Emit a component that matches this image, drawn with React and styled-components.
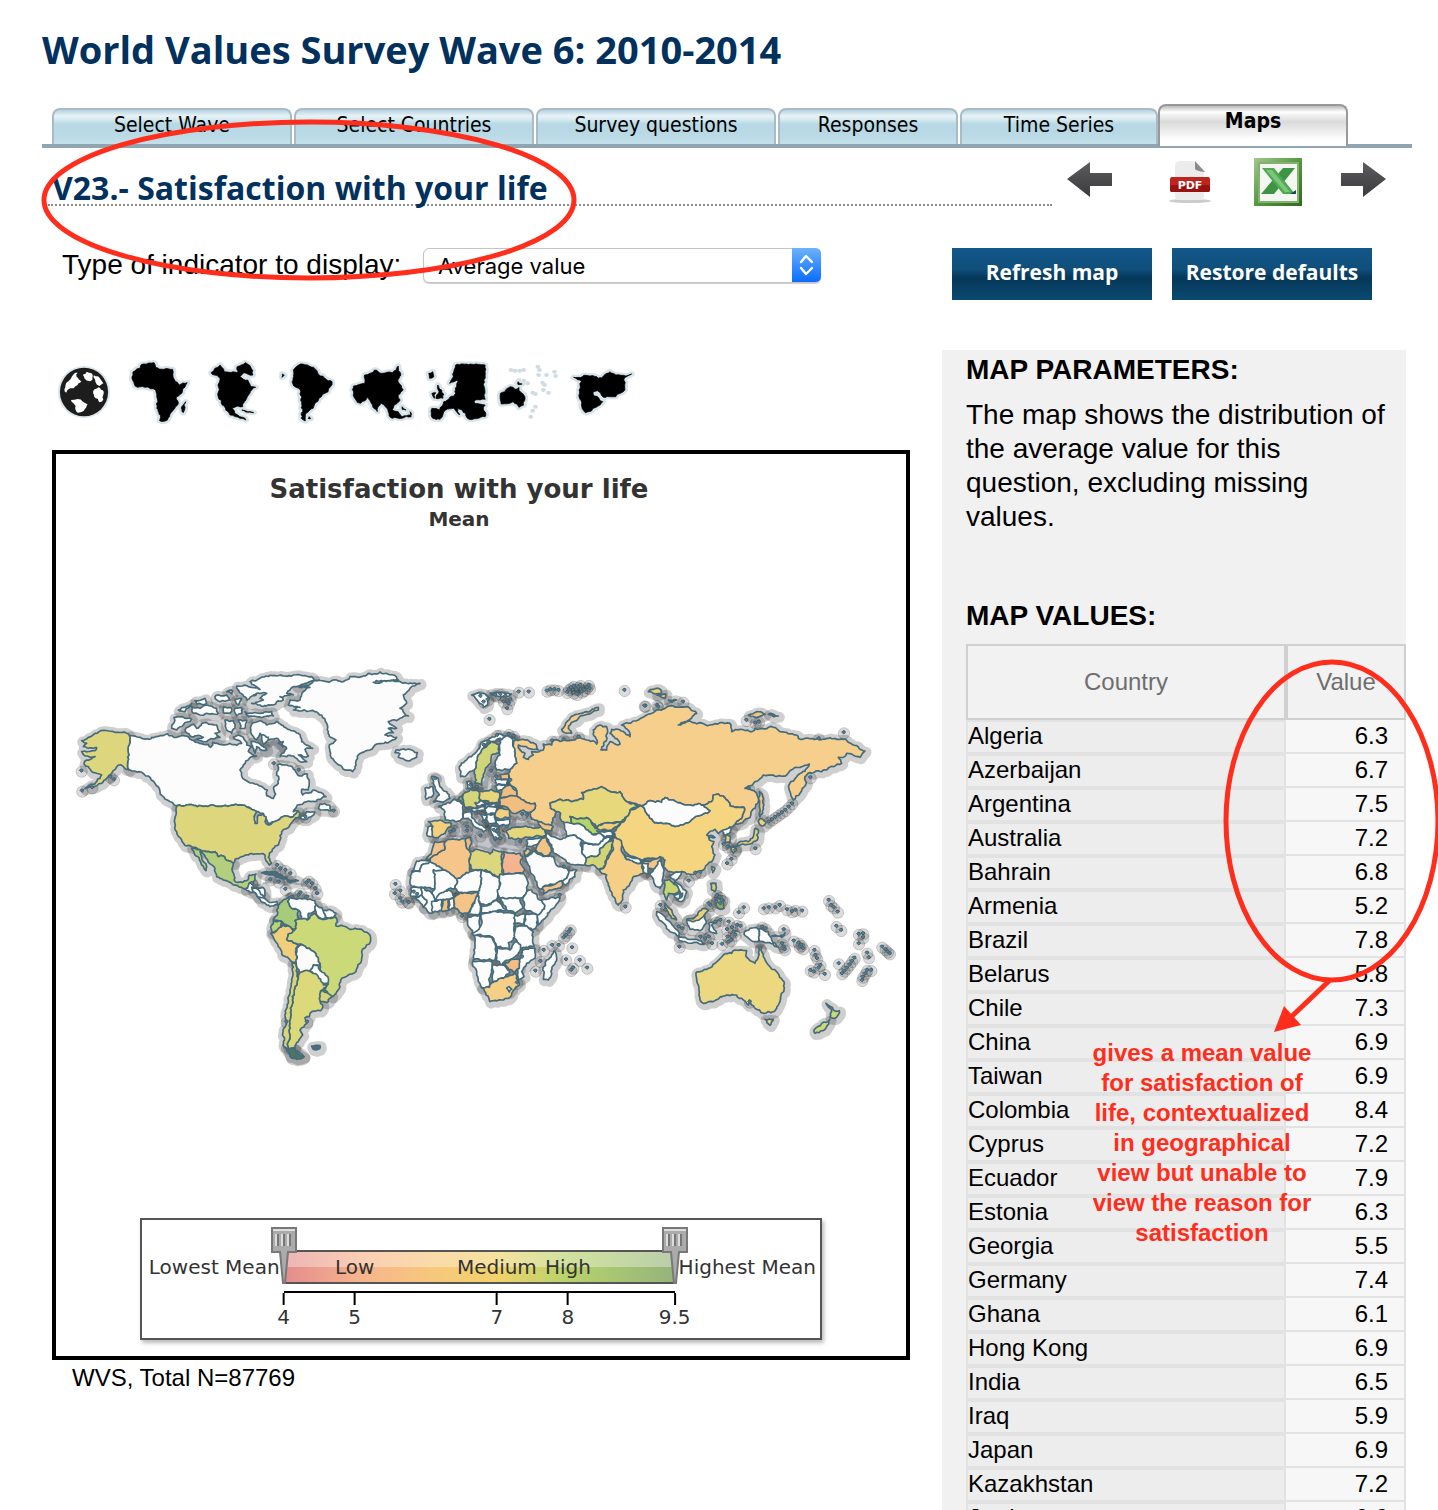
import React, { useState } from "react";
import styled, { createGlobalStyle, css } from "styled-components";

const GlobalStyle = createGlobalStyle`
  *, *::before, *::after { box-sizing: border-box; }
  body { margin: 0; background: #fff; color: #000; font-family: "Liberation Sans", Arial, sans-serif; }
  h1, h2, h3, p { margin: 0; }
`;

const navy = "#01315c";
const red = "#ff2d1c";
const headingFont = `"Trebuchet MS", "Open Sans", sans-serif`;
const verdana = `"DejaVu Sans", Verdana, sans-serif`;

/* ---------- page frame ---------- */

const Page = styled.main`
  position: relative;
  height: 100vh;
  overflow: hidden;
  padding: 24px 26px 0 42px;
`;

const Title = styled.h1`
  height: 52px;
  font: 700 38px/50px ${headingFont};
  color: ${navy};
`;

const Tabs = styled.nav`
  display: flex;
  align-items: flex-end;
  gap: 2px;
  height: 44px;
  margin-top: 28px;
  padding-left: 10px;
  background: linear-gradient(#8fa5b2, #8fa5b2) left bottom / 100% 4px no-repeat;
`;

const Tab = styled.a`
  width: ${(p) => p.$width}px;
  height: 36px;
  margin-bottom: 4px;
  border: 2px solid #a9bcc6;
  border-bottom: 0;
  border-radius: 8px 8px 0 0;
  background: linear-gradient(#b5d3df 0, #e8f3f7 6px, #d3e8ef 10px, #b7d8e4 14px, #b7d8e4 22px, #c5e1eb 36px);
  color: #000;
  font: 400 21px/30px "DejaVu Sans Condensed", Tahoma, sans-serif;
  text-align: center;
  text-decoration: none;
  ${(p) =>
    p.$active &&
    css`
      height: 42px;
      margin: 0 0 2px -2px;
      border-color: #999;
      background: linear-gradient(#bbb 0, #fff 6px, #eee 10px, #dadada 16px, #fff 34px);
      font-weight: 700;
    `}
`;

const QuestionRow = styled.header`
  display: flex;
  align-items: flex-start;
  justify-content: space-between;
  padding: 10px 24px 0 6px;
`;

const Question = styled.h2`
  flex: 0 1 1004px;
  height: 48px;
  padding-left: 4px;
  border-bottom: 2px dotted #8c8c8c;
  font: 700 32px/60px ${headingFont};
  color: ${navy};
  white-space: nowrap;
`;

const Tools = styled.div`
  display: flex;
  gap: 38px;
  align-items: center;
`;

const ToolButton = styled.button`
  width: 48px;
  height: 48px;
  padding: 0;
  border: 0;
  background: none;
  &:first-child { margin-right: 16px; }
  svg { display: block; }
`;

const ControlRow = styled.form`
  display: flex;
  align-items: flex-start;
  height: 102px;
  margin-top: 42px;
  padding: 0 40px 0 20px;
`;

const Label = styled.label`
  width: 361px;
  font-size: 28px;
  line-height: 34px;
`;

const SelectBox = styled.div`
  position: relative;
  width: 398px;
  height: 35px;
  svg { position: absolute; right: 0; top: 0; pointer-events: none; }
`;

const Select = styled.select`
  appearance: none;
  width: 100%;
  height: 35px;
  padding: 1px 14px 0;
  border: 1px solid #c4c4c4;
  border-radius: 6px;
  background: #fff;
  box-shadow: 0 1px 1px #ccc;
  color: #000;
  font: 400 22px/33px Inter, sans-serif;
`;

const Actions = styled.div`
  display: flex;
  gap: 20px;
  margin-left: auto;
`;

const ActionButton = styled.button`
  width: 200px;
  height: 52px;
  padding: 0 0 4px;
  border: 0;
  background: linear-gradient(#12578a 0, #104f7b 40%, #04375a 58%, #073d60 70%, #0b4a71 100%);
  color: #fff;
  font: 700 21px/30px ${headingFont};
  white-space: nowrap;
`;

const Content = styled.div`
  display: flex;
  align-items: flex-start;
  justify-content: space-between;
  padding: 0 6px 0 10px;
`;

/* ---------- map column ---------- */

const MapColumn = styled.section`
  flex: 0 1 858px;
`;

const RegionBar = styled.div`
  display: flex;
  gap: 14px;
  height: 100px;
  padding: 12px 2px 0;
`;

const RegionButton = styled.button`
  width: 60px;
  height: 60px;
  padding: 0;
  border: 0;
  background: none;
  svg { display: block; overflow: visible; }
`;

const MapFrame = styled.figure`
  display: flex;
  flex-direction: column;
  height: 910px;
  margin: 0;
  border: 4px solid #000;
`;

const MapHeading = styled.figcaption`
  height: 196px;
  padding: 18px 44px 0 0;
  color: #333;
  font-family: ${verdana};
  font-weight: 700;
  text-align: center;
`;

const MapTitle = styled.div`
  font-size: 26px;
  line-height: 34px;
`;

const MapSubtitle = styled.div`
  font-size: 20px;
  line-height: 26px;
`;

const MapSvg = styled.svg`
  display: block;
  width: 100%;
`;

const Footnote = styled.p`
  padding: 0 20px;
  font-size: 24px;
  line-height: 36px;
`;

/* ---------- legend ---------- */

const Legend = styled.div`
  display: grid;
  grid-template-columns: 1fr 391px 1fr;
  width: 682px;
  height: 122px;
  margin: auto auto 16px;
  padding-top: 30px;
  border: 2px solid #555;
  box-shadow: 2px 3px 4px #bbb;
  color: #333;
  font: 400 20px/34px ${verdana};
  white-space: nowrap;
`;

const LegendEnd = styled.span`
  display: flex;
  justify-content: ${(p) => (p.$right ? "flex-start" : "flex-end")};
  padding: 0 4px;
`;

const Scale = styled.div`
  position: relative;
`;

const Bar = styled.div`
  position: relative;
  height: 34px;
  border: solid #555;
  border-width: 2px 0;
  line-height: 30px;
  background:
    linear-gradient(rgba(255, 255, 255, 0.35) 50%, transparent 50%),
    linear-gradient(90deg, #e48c8e 0, #f7b58c 20%, #f6c87c 38%, #f2d26c 54%, #b9d36b 72%, #94b47c 100%);
`;

const Mark = styled.span`
  position: absolute;
  top: 0;
  transform: translateX(-50%);
`;

const Axis = styled.div`
  position: relative;
  height: 40px;
  margin-top: 7px;
  border-top: 2px solid #000;
`;

const Tick = styled(Mark)`
  display: flex;
  flex-direction: column;
  align-items: center;
  line-height: 24px;
  &::before { content: ""; width: 2px; height: 12px; background: #000; }
`;

const Handle = styled.svg`
  position: absolute;
  top: -23px;
  margin-left: -13px;
  pointer-events: none;
`;

const Range = styled.input`
  position: absolute;
  top: -24px;
  left: ${(p) => (p.$upper ? "50%" : "-13px")};
  width: calc(50% + 13px);
  height: 56px;
  margin: 0;
  opacity: 0;
`;

/* ---------- parameter column ---------- */

const Side = styled.aside`
  flex: 0 0 464px;
  padding-left: 24px;
  background: #f1f1f1;
`;

const SideTitle = styled.h3`
  font-size: 28px;
  line-height: 40px;
`;

const SideText = styled.p`
  height: 206px;
  padding: 8px 20px 0 0;
  font-size: 28px;
  line-height: 34px;
`;

const Values = styled.table`
  width: 100%;
  margin-top: 8px;
  border-collapse: separate;
  border-spacing: 0;
  font-size: 24px;
  line-height: 28px;
`;

const HeadCell = styled.th`
  width: ${(p) => p.$width};
  height: 76px;
  padding: 0;
  border: 2px solid #d0d0d0;
  background: #f2f2f2;
  color: #6e6e6e;
  font-weight: 400;
`;

const NameCell = styled.td`
  height: 34px;
  padding: 0 0 2px;
  border: 2px solid #e2e2e2;
  background: #ededed;
`;

const ValueCell = styled.td`
  height: 34px;
  padding: 0 16px 0 0;
  border: solid #e2e2e2;
  border-width: 0 2px 2px 0;
  background: #f7f7f7;
  text-align: right;
`;

/* ---------- hand-drawn notes over the page ---------- */

const Markup = styled.svg`
  position: absolute;
  left: 0;
  top: 0;
  width: 1438px;
  height: 1510px;
  pointer-events: none;
`;

const Note = styled.p`
  position: absolute;
  left: 1087px;
  top: 1038px;
  width: 230px;
  color: ${red};
  font-size: 24px;
  font-weight: 700;
  line-height: 30px;
  text-align: center;
`;

/* ---------- map drawing ---------- */

/* Outlines are kept on four overlapping sheets; a letter in a path switches sheet. */
const SHEETS = { A: [0, 0], B: [0, 600], C: [1020, 60], D: [1740, 60] };

function parse(text) {
  let off = SHEETS.A;
  const pts = [];
  text.split(/\s+/).forEach((t) => {
    if (SHEETS[t]) off = SHEETS[t];
    else if (t) {
      const [x, y] = t.split(",").map(Number);
      pts.push([x + off[0], y + off[1]]);
    }
  });
  return pts;
}

const noise = (x, y) => {
  const s = Math.sin(x * 12.9898 + y * 78.233) * 43758.5453;
  return s - Math.floor(s) - 0.5;
};

/* Shared borders break the same way from both sides, since ends are ordered first. */
function split(a, b) {
  const len = Math.hypot(b[0] - a[0], b[1] - a[1]);
  if (len < 9) return [];
  const [p, q] = a[0] < b[0] || (a[0] === b[0] && a[1] < b[1]) ? [a, b] : [b, a];
  const k = noise(p[0] + q[1], p[1] + q[0]) * Math.min(0.42, 7 / len);
  const m = [(a[0] + b[0]) / 2 - (q[1] - p[1]) * k, (a[1] + b[1]) / 2 + (q[0] - p[0]) * k];
  return [...split(a, m), m, ...split(m, b)];
}

function outline(text) {
  const pts = parse(text);
  const out = [];
  pts.forEach((p, i) => {
    out.push(p, ...split(p, pts[(i + 1) % pts.length]));
  });
  return "M" + out.map((p) => p[0].toFixed(1) + " " + p[1].toFixed(1)).join("L") + "Z";
}

const W = "#fcfcfc";
const LAND = [
  [W, "A 208,257 240,262 268,268 275,262 300,257 322,251 350,262 375,258 395,270 418,280 445,283 452,292 458,276 485,284 510,280 530,286 545,280 520,262 535,255 550,262 560,285 575,290 565,305 590,318 568,325 550,345 540,360 545,378 556,390 585,402 610,413 622,420 620,437 640,445 647,432 642,410 655,400 657,388 650,375 655,360 652,345 690,348 705,360 720,378 742,372 748,395 745,420 725,418 728,435 745,430 760,420 790,432 798,440 765,455 740,455 712,465 700,485 715,484 700,500 668,500 650,512 625,520 618,505 610,490 595,485 575,480 545,465 352,467 345,466 315,447 300,425 285,400 265,378 240,365 208,360"],
  ["#ddd67c", "A 352,467 545,465 575,478 590,485 582,500 585,520 592,520 595,495 610,492 618,500 615,515 625,525 650,512 668,500 700,500 715,484 720,490 718,500 700,512 690,525 665,545 660,570 655,585 640,595 628,610 625,622 634,640 628,645 618,632 615,615 600,612 585,612 565,615 545,620 525,628 520,640 505,632 490,618 475,620 465,605 440,605 400,592 380,588 365,570 350,545 345,520 348,495"],
  ["#ddd67c", "A 208,257 200,250 165,247 130,241 105,250 85,262 65,272 80,280 70,290 110,293 105,302 65,305 75,318 105,320 80,330 72,342 85,350 98,367 125,375 120,385 90,405 75,416 95,412 125,400 140,385 155,370 175,345 190,350 208,360"],
  ["#b3cf7d", "A 395,595 440,605 465,605 475,620 490,618 505,632 520,640 518,665 522,690 535,697 560,692 568,675 588,672 585,690 570,697 560,715 545,712 520,705 490,690 470,680 465,655 448,640 435,618 420,605 425,620 440,650 438,662 425,645 405,615"],
  [W, "A 556,717 575,697 580,712 608,712 615,735 612,745 628,757 650,755 655,765 640,768 620,765 600,748 585,728 565,722"],
  [W, "A 575,712 598,722 612,740 600,742 585,728"],
  [W, "A 718,505 740,485 765,487 740,508"],
  [W, "A 780,462 808,465 815,482 790,480 775,475"],
  [W, "A 690,150 720,150 730,125 750,112 710,108 755,100 762,92 800,95 830,90 850,95 870,80 905,80 925,70 960,66 1000,75 1015,90 940,97 990,92 1035,98 1080,100 1050,115 1030,135 1040,160 1020,175 1045,198 1020,205 1010,212 985,215 1010,235 985,235 1000,248 975,255 1010,262 985,278 950,282 930,300 905,308 892,318 888,345 878,365 850,358 830,340 812,310 808,285 828,270 812,262 805,245 800,220 785,195 765,185 700,180 720,172 685,165"],
  [W, "A 1008,300 1045,297 1072,308 1070,322 1040,332 1015,322 1020,312 1005,308"],
  [W, "A 570,95 600,85 650,78 700,75 755,80 762,92 740,100 700,110 680,130 700,135 660,140 670,150 650,155 640,165 600,165 575,160 610,150 600,145 620,130 580,135 590,130 560,150 535,120 530,108 565,110 600,118"],
  [W, "A 375,240 400,222 410,235 425,220 440,218 470,225 480,245 465,250 480,262 440,275 405,270 430,262 390,258"],
  [W, "A 342,203 368,200 395,208 370,225 350,240 335,235"],
  [W, "A 575,222 600,212 620,225 650,215 680,235 715,250 725,275 758,295 735,298 745,318 715,315 740,335 720,335 700,318 660,318 680,295 650,265 620,270 600,250 590,270 572,245"],
  [W, "A 495,210 520,212 525,235 515,250 498,235"],
  [W, "A 535,210 560,210 555,235 540,235"],
  [W, "A 555,185 600,190 635,185 640,198 565,200"],
  [W, "A 395,170 420,175 440,165 470,175 475,190 440,190 420,195 400,190"],
  [W, "A 355,180 395,160 375,185"],
  [W, "A 405,152 435,145 440,160 410,162"],
  [W, "A 465,140 500,135 510,150 480,155"],
  [W, "A 490,170 515,175 510,190 490,188"],
  [W, "A 500,125 518,122 515,132"],
  [W, "A 525,150 545,145 535,165"],
  [W, "A 525,175 545,172 545,190 530,198"],
  [W, "A 655,280 670,275 668,290"],
  [W, "A 575,275 600,282 620,300 605,300 590,290 585,310"],
  [W, "A 605,255 625,262 610,285"],
  ["#a6cb7a", "B 650,180 655,165 668,152 687,140 683,155 692,172 718,182 712,195 718,207 705,212 708,235 695,236 680,225 664,214 640,208 652,195"],
  ["#b8d478", "B 640,210 664,214 662,228 650,242 636,248 632,232"],
  ["#f0cf7c", "B 632,250 650,242 668,225 695,236 700,243 685,252 680,268 700,278 718,282 708,295 708,335 696,335 665,312 655,290 640,262"],
  [W, "B 687,140 700,145 735,145 765,152 770,165 765,182 745,190 742,208 725,208 718,182 692,172 683,155"],
  [W, "B 768,165 785,172 790,182 795,205 775,200 768,185"],
  [W, "B 790,182 808,178 828,190 820,203 795,205"],
  ["#cbd978", "B 705,212 718,207 742,210 765,190 775,203 800,207 825,200 832,215 828,228 850,228 865,235 905,238 925,250 932,265 928,282 905,305 900,340 888,365 865,375 842,390 840,410 828,430 818,440 795,420 805,402 803,380 785,370 780,345 775,325 765,308 740,295 728,285 718,282 700,278 680,268 685,252 700,243 708,235"],
  [W, "B 718,287 728,285 740,295 765,308 775,325 780,345 760,345 750,362 718,368 708,335 710,295"],
  [W, "B 760,345 775,347 780,362 803,380 803,400 780,402 780,388 760,372 750,362"],
  ["#d6d478", "B 788,420 815,438 805,455 782,455 778,435"],
  ["#dcd97b", "B 718,370 745,362 775,380 782,388 790,405 800,405 782,422 778,445 788,465 782,482 750,490 748,500 735,503 740,520 720,540 728,555 715,575 705,592 685,595 690,555 692,500 697,450 705,410 715,385"],
  ["#d8d478", "B 697,338 708,340 712,370 715,385 705,410 697,450 692,500 690,555 685,595 705,598 732,620 712,625 690,618 672,590 668,550 678,510 682,470 690,430 695,390"],
  ["#4b7566", "B 676,592 705,596 715,612 732,620 710,628 690,618"],
  ["#4b6d80", "B 755,588 780,587 778,597 760,598"],

  ["#f6cf8c", "C 340,205 375,210 410,228 415,240 385,235 355,225 360,240 375,250 370,262 385,268 400,255 395,245 430,240 430,222 455,225 460,212 500,212 530,205 560,210 585,215 590,222 580,180 600,165 620,170 622,190 612,225 603,240 620,240 630,215 655,225 660,222 630,190 635,178 660,180 690,200 688,185 665,165 685,160 715,150 740,135 760,128 D 50,120 100,108 150,115 170,130 155,145 115,165 140,155 180,158 210,165 240,158 270,160 275,185 300,178 330,185 345,175 400,172 420,185 470,195 475,205 530,207 570,203 610,208 640,225 675,243 660,262 620,250 610,262 595,262 605,280 580,290 545,305 510,308 495,320 497,345 480,370 460,390 450,365 447,345 470,320 500,295 508,282 480,292 465,292 440,315 400,315 370,315 345,335 315,355 330,358 350,370 355,395 345,415 325,445 300,460 285,462 310,430 312,412 285,412 270,408 250,378 235,372 220,375 215,395 190,405 150,405 120,398 100,390 75,383 65,397 30,392 5,408 C 720,405 700,400 680,395 660,365 625,362 605,350 575,360 545,368 550,388 515,395 480,388 465,395 450,400 452,415 470,425 465,440 450,475 430,465 415,455 395,448 390,430 405,415 405,400 370,390 350,378 350,362 340,350 328,335 325,310 330,298 350,280 345,250 340,225"],
  ["#f4c98a", "C 485,178 510,145 560,125 595,112 595,120 555,135 520,155 505,175 515,190 495,188"],
  ["#e8d87c", "C 450,400 465,395 480,388 515,395 550,388 545,368 575,360 605,350 625,362 660,365 680,395 715,408 690,420 680,440 665,455 620,458 590,470 565,445 540,445 510,440 515,460 495,460 480,445 482,430 470,425 452,415"],
  ["#b4d465", "C 510,440 540,445 565,445 585,475 620,475 595,495 575,492 545,465 515,460"],
  [W, "C 490,460 515,460 545,465 575,492 600,490 615,505 600,520 560,520 545,510 520,495 500,500 495,480"],
  ["#f0cf7c", "C 590,470 625,458 662,458 640,475 620,480 600,480"],
  [W, "C 590,482 635,485 640,500 615,502"],
  ["#f6d580", "C 720,408 690,420 680,440 650,475 640,485 645,500 662,515 675,545 700,560 730,570 D 10,570 30,565 60,560 75,570 70,590 90,605 125,605 140,612 165,610 195,595 215,575 225,555 215,530 222,515 208,510 205,500 225,502 200,495 225,478 235,490 260,478 285,462 310,430 312,412 285,412 270,408 250,378 235,372 220,375 215,395 190,405 210,422 190,432 160,445 145,458 115,468 75,460 50,458 30,445 20,430 5,408"],
  [W, "D 5,408 30,392 65,397 75,383 100,390 120,398 150,405 190,405 210,422 190,432 160,445 145,458 115,468 75,460 50,458 30,445 20,430"],
  ["#f6cf86", "C 630,510 645,500 665,520 665,545 680,568 722,580 745,578 735,600 730,610 700,620 690,640 670,660 668,690 655,705 640,680 625,640 620,615 605,610 598,600 610,595 625,565 640,540 635,520"],
  ["#f3c486", "C 725,575 750,575 780,562 D 62,562 65,575 40,600 30,595 15,605 5,590 5,575"],
  ["#d2d477", "C 555,585 558,565 595,555 600,535 625,515 640,510 635,530 630,545 615,575 610,595 595,598 585,588"],
  [W, "C 545,545 545,520 600,520 615,505 640,495 625,515 600,535 595,555 558,565"],
  [W, "C 440,490 460,500 480,508 500,500 520,495 545,510 545,545 558,565 555,585 525,585 500,578 480,560 462,550 455,525 440,505"],
  [W, "C 672,555 722,572 722,580 680,568"],
  [W, "C 728,578 745,580 745,610 732,608"],
  ["#e6d67a", "C 318,485 335,473 370,470 400,475 430,470 438,498 400,502 365,508 325,505"],
  ["#f0c47f", "C 415,455 445,463 460,470 455,482 430,478"],
  ["#f4c486", "C 415,520 430,503 440,505 445,520 455,545 440,558 405,540"],
  [W, "C 380,510 415,505 430,503 415,520 395,530 380,530"],
  ["#eec67c", "C 372,545 380,535 392,545 375,558"],
  [W, "C 375,560 400,543 440,558 460,560 475,590 505,600 500,625 485,635 430,650 420,658 405,630 390,600"],
  [W, "C 505,600 530,600 525,620 495,645 487,635 500,625"],
  ["#f3c486", "C 428,652 485,632 488,648 455,660 430,672"],
  ["#f5b490", "C 310,545 360,550 368,560 362,570 375,600 370,610 310,610"],
  ["#dcd67c", "C 210,545 225,538 270,552 280,538 305,545 308,625 270,605 215,598 205,575"],
  ["#f5c58a", "C 90,565 133,540 135,515 170,508 200,507 200,530 210,545 207,575 210,605 170,627 130,600 90,575"],
  ["#f2b987", "C 198,505 212,503 215,515 210,540 200,535"],
  ["#f3c387", "C 78,568 95,545 105,515 135,515 133,540 90,565"],
  [W, "C 35,605 50,573 88,570 90,575 65,585 60,605"],
  [W, "C 35,605 60,605 65,585 90,575 130,600 100,600 105,655 65,652 35,650 30,630"],
  [W, "C 105,655 100,600 130,600 170,627 165,655 140,660 125,680 105,690 95,670"],
  [W, "C 170,627 210,605 245,600 245,625 235,665 200,668 180,668 165,655"],
  [W, "C 245,600 300,625 300,660 288,690 260,705 240,700 235,665 245,625"],
  [W, "C 32,655 65,652 65,675 32,678"],
  [W, "C 45,685 65,675 80,690 70,712"],
  [W, "C 65,652 95,670 105,690 95,730 70,712 80,690 65,675"],
  [W, "C 95,695 125,687 127,722 98,728"],
  ["#f0c47f", "C 125,685 145,687 147,720 128,725"],
  [W, "C 147,690 165,680 165,715 148,720"],
  [W, "C 105,690 125,668 145,660 165,680 145,687"],
  ["#f3c486", "C 165,680 180,668 235,670 230,690 215,712 205,728 185,730 165,715"],
  [W, "C 205,730 215,712 235,675 242,705 235,735 205,738"],
  [W, "C 240,705 260,708 290,690 320,720 270,725 245,730"],
  [W, "C 300,612 370,610 385,640 380,665 360,685 300,685 292,660 302,640"],
  [W, "C 300,685 360,685 368,715 345,730 318,718"],
  [W, "C 380,665 395,660 420,690 435,708 412,735 375,720 368,690"],
  [W, "C 425,690 480,682 465,710 440,740 415,765 412,735 435,708"],
  [W, "C 378,732 412,735 412,765 398,780 372,765"],
  [W, "C 345,735 375,732 370,762 345,762"],
  [W, "C 345,768 372,768 400,785 402,830 365,835 340,800"],
  [W, "C 245,732 300,725 345,735 342,770 340,810 325,818 330,840 290,830 275,800 220,795 215,790 240,770"],
  [W, "C 205,740 240,735 240,770 218,790 203,765"],
  [W, "C 222,797 275,802 288,830 285,870 220,870 225,830"],
  [W, "C 290,832 330,840 345,815 362,825 355,850 325,870 305,885 287,870"],
  [W, "C 365,838 405,835 405,865 380,880 365,905 372,920 355,930 358,870"],
  ["#f3bd85", "C 312,882 335,868 357,868 358,895 345,908 325,900"],
  [W, "C 218,873 275,875 272,915 268,952 245,953 230,910"],
  [W, "C 278,885 305,885 330,905 310,925 275,938"],
  ["#f6cf86", "C 245,953 268,952 275,938 310,925 345,908 352,930 358,945 335,975 310,990 270,995 258,975"],
  [W, "C 320,955 328,950 335,957 328,966"],
  [W, "C 462,842 470,865 455,910 445,930 430,928 428,900 440,870 455,855"],

  ["#d0d578", "C 245,345 225,340 222,300 232,270 250,235 275,212 298,225 298,250 275,255 272,280 255,300 250,320 245,335"],
  [W, "C 182,320 178,290 215,260 240,225 290,195 345,205 340,215 300,205 270,215 250,235 232,270 222,300 200,315"],
  [W, "C 300,210 318,198 335,205 345,250 350,280 330,298 290,300 285,280 300,255 298,225"],
  ["#f3c080", "C 300,315 325,312 328,330 305,330"],
  [W, "C 285,330 325,332 320,345 290,345"],
  [W, "C 285,348 320,348 310,360 290,360"],
  ["#e5d67a", "C 238,365 275,358 298,368 298,398 270,400 240,390"],
  ["#d5d478", "C 190,372 210,358 238,365 240,390 225,415 195,412 188,395"],
  [W, "C 200,335 215,338 215,355 202,355"],
  ["#f0bd80", "C 300,382 310,355 330,345 350,362 350,378"],
  ["#f2bd80", "C 300,385 350,378 370,390 405,400 405,415 385,428 370,420 340,430 325,415 300,408"],
  ["#f5cf80", "C 285,425 300,415 325,418 332,440 300,448 285,440"],
  [W, "C 95,320 115,325 120,350 140,365 150,385 120,395 100,395 118,375 105,350 100,340"],
  [W, "C 75,355 98,350 98,378 78,388"],
  [W, "C 115,410 150,400 165,388 190,405 188,430 190,445 170,455 135,450 135,425"],
  ["#9fc070", "C 172,388 188,375 190,398"],
  ["#f5d07c", "C 85,455 130,455 155,462 135,490 115,502 98,500 98,470"],
  [W, "C 85,470 98,470 98,500 82,498"],
  [W, "C 190,430 215,420 215,440 240,465 260,480 250,485 235,475 205,445 190,445"],
  [W, "C 225,398 245,392 258,402 235,408"],
  [W, "C 205,418 255,410 255,422 225,425"],
  [W, "C 258,402 290,402 285,412 255,412"],
  [W, "C 255,415 290,412 285,430 260,435"],
  [W, "C 235,430 260,435 255,455"],
  [W, "C 260,435 285,435 290,460 265,460"],
  [W, "C 290,450 330,448 325,465 295,468"],
  [W, "C 272,470 300,470 285,485 300,500 285,512 275,490"],
  [W, "C 215,75 250,70 268,85 262,105 250,112 235,95"],
  [W, "C 270,70 310,68 335,72 300,80"],

  [W, "D 40,600 60,570 72,600 70,640 60,655 45,645 30,615"],
  ["#c9d66f", "D 72,630 88,628 110,645 118,660 100,672 85,670 80,690 72,660"],
  [W, "D 88,615 125,605 118,620 105,635 140,665 125,695 110,690 128,675 110,645"],
  [W, "D 100,672 128,670 115,688"],
  ["#f0d070", "D 75,700 95,720 110,750 95,745 80,720"],
  [W, "D 140,750 195,738 198,760 180,782 150,778"],
  ["#f0d070", "D 140,748 165,742 190,715 205,722 190,740 160,755"],
  [W, "D 50,725 75,740 118,790 118,800 90,785 55,745"],
  [W, "D 115,803 170,808 195,820 160,818 118,812"],
  [W, "D 205,760 235,750 215,765 230,790 210,785"],
  [W, "D 312,792 330,775 355,777 355,815 345,815 320,800"],
  [W, "D 355,777 385,785 395,810 415,832 370,815 355,815"],
  [W, "D 395,798 420,798 435,788 425,802"],
  ["#d9d070", "D 212,640 228,640 225,665 215,660"],
  ["#8fae5c", "D 225,690 235,685 252,690 252,715 235,715"],
  ["#ebd880", "D 170,930 168,908 205,895 225,880 250,855 275,850 285,840 320,842 318,860 345,880 355,860 358,835 370,860 385,885 410,905 432,935 432,960 420,995 400,1025 370,1030 345,1015 328,990 325,1005 310,990 290,975 250,978 220,995 190,1000 180,990"],
  ["#ebd880", "D 375,1048 400,1048 390,1066"],
  ["#cbd978", "D 558,1000 580,1020 598,1022 585,1045 570,1042 575,1025"],
  ["#cbd978", "D 570,1048 548,1082 525,1090 522,1080 545,1060"],
  [W, "D 245,482 270,470 275,478 262,492 252,498"],
  ["#f0c97c", "D 258,495 272,500 272,518 258,518"],
  ["#f0d070", "D 355,455 360,445 378,455 365,468"],
  ["#e8ce72", "D 345,475 355,480 352,510 330,522 300,525 285,530 295,518 325,515 340,500"],
  ["#e8ce72", "D 270,530 288,535 280,550"],
  ["#f3c486", "D 358,365 368,380 368,430 360,440 358,410"],
  ["#f0d070", "D 215,590 225,595 218,608"],
  ["#f0d070", "D 25,65 55,55 65,68 40,70"],
  ["#f3c486", "D 50,75 78,72 75,85"],
  ["#f3c486", "D 85,90 110,90 95,97"],
  ["#f3c486", "D 325,135 350,125 375,133 340,140"],
  ["#7d8a5c", "D 385,133 415,138 400,140"],
  ["#4b6d80", "B 605,68 635,65 665,75 682,85 655,82 630,75"],
  ["#4b6d80", "B 680,88 715,92 690,98"],
].map(([fill, text]) => [fill, outline(text)]);

const ISLETS = [
  "A 63,362 65,422 95,412 150,380 160,388 820,482 735,500 640,340 715,360",
  "B 650,45 660,55 675,60 690,70 655,95 630,88 738,98 755,100 765,115 770,130 715,135 740,140 675,117 745,92 695,140 720,128",
  "B 1005,102 1020,122 1003,130 1020,145 1043,155 678,515 740,515 575,100",
  "C 310,95 320,115 330,88 385,65 355,65 267,147 450,58 462,58 505,58 520,48 535,50 560,52 545,65 520,68 565,45 672,60 735,107 770,105",
  "C 240,78 250,95 262,88 285,74 300,72 315,78 325,100 440,62 474,60 500,66 512,52 528,58 540,45 552,60 530,72 568,55",
  "C 455,212 535,200 490,208 265,215 250,225 290,195 325,192 340,198 210,345 230,350 272,302 288,320 105,325",
  "C 150,485 160,480 200,470 200,482 240,497 285,505 300,505 295,490 280,480 270,465 250,455 360,515 380,435 365,432 320,470",
  "C 497,795 505,785 510,778 490,802 430,840 455,825 475,825 420,873 405,902 497,868 515,832 538,870 512,900 560,893 518,893 490,590 478,675 675,710 185,738 350,938 365,860 5,695 25,697 40,665 50,672 330,330",
  "D 128,95 12,107 53,110 345,158 318,150 355,155 610,187 535,205",
  "D 385,455 395,448 405,441 415,434 425,427 435,420 445,410 455,400 510,322 260,580 273,567 262,530 250,522 285,540 345,535 325,355",
  "D 145,632 165,608 180,606 230,675 238,680 245,690 240,700 228,695 370,715 385,712 405,712 418,705 440,718 455,724 465,720 485,722 295,727 310,712",
  "D 565,690 572,705 580,712 592,725 588,768 602,780 655,792 668,790 668,802 655,820 725,830 735,838 742,845 748,850 430,830 425,820 433,838 430,778",
  "D 460,812 475,818 483,825 488,835 478,830 522,840 525,855 530,865 510,900 520,905 540,885 535,893 553,912 595,880 605,910 612,902 620,893 628,883 635,873 642,863 680,848 685,862 692,900 680,900 675,910 668,920 665,930",
  "D 60,705 75,720 115,770 125,775 180,800 195,805 205,800 215,820 245,822 265,815 272,810 260,778 275,772 290,765 300,768 280,785 285,795 262,800 265,755 240,750 225,755 117,830 365,770 375,775 210,705 205,700 328,995 360,835",
].flatMap(parse);

/* Narrow seas, where the coast shadows of several countries pile up. */
const SEAS = [
  "C 460,432 490,428 500,440 485,450 490,470 497,495 480,505 465,495 472,475 458,455",
  "C 335,452 350,438 375,445 400,455 405,465 370,468 340,472",
  "C 250,335 262,300 280,275 298,250 300,268 285,285 290,305 280,330 262,350 235,362 225,350",
  "C 215,510 225,530 270,548 282,532 310,540 360,548 370,530 370,510 325,508 300,505 285,500 262,480 240,470 205,450 180,455 155,470 140,500 170,503 200,500",
  "C 362,560 372,570 392,610 425,660 430,678 415,675 385,620",
  "C 462,560 480,580 505,598 478,592",
  "A 575,470 600,478 620,490 630,512 618,515 605,490 585,482",
  "A 620,275 650,270 690,300 660,325 610,320 595,300",
  "B 605,100 640,80 700,95 770,110 775,130 740,108 690,100",
].map(outline);

const AREAS = LAND.map((l) => l[1]);

function WorldMap() {
  return (
    <MapSvg viewBox="-12 0 2550 1290" role="img" aria-label="World map of mean satisfaction">
      <g fill="none" stroke="#000" strokeOpacity="0.19" strokeWidth="33" strokeLinejoin="round">
        {AREAS.map((d, i) => (
          <path key={i} d={d} transform="translate(3 4)" />
        ))}
      </g>
      <g fill="#000" fillOpacity="0.14" stroke="#000" strokeOpacity="0.25" strokeWidth="2">
        {ISLETS.map(([x, y], i) => (
          <circle key={i} cx={x + 2} cy={y + 3} r="17" />
        ))}
      </g>
      <g fill="#4c5560" fillOpacity="0.35">
        {SEAS.map((d, i) => (
          <path key={i} d={d} />
        ))}
      </g>
      <g stroke="#456b7b" strokeWidth="5" strokeLinejoin="round">
        {LAND.map(([fill, d], i) => (
          <path key={i} d={d} fill={fill} />
        ))}
      </g>
      <g fill="#5b7f92" stroke="#3e6274" strokeWidth="3">
        {ISLETS.map(([x, y], i) => (
          <path key={i} d={`M${x - 5} ${y - 1}l4 -4l6 1l1 5l-5 4z`} />
        ))}
      </g>
    </MapSvg>
  );
}

/* ---------- region icons ---------- */

const REGIONS = [
  ["World", null],
  ["Africa", "235,65 262,42 288,38 292,52 335,58 340,90 352,105 372,98 360,125 345,140 348,165 330,190 322,210 302,212 295,175 292,120 265,112 240,108 232,85|358,170 368,155 362,188"],
  ["North America", "432,68 455,45 465,65 500,68 498,50 518,38 532,50 538,75 515,68 505,80 525,90 535,110 545,112 530,130 520,150 512,170 500,168 485,175 492,190 505,200 520,210 505,205 480,195 460,165 450,140 455,85 440,75|510,180 540,188 520,186"],
  ["South America", "640,60 658,42 680,48 700,62 705,75 738,95 728,125 705,145 690,175 672,190 670,213 660,205 658,120 638,100|612,72 617,76 611,82|680,200 684,206 678,206"],
  ["Asia", "792,108 820,100 820,75 845,60 865,70 890,68 905,48 912,75 905,95 918,120 905,135 910,150 895,165 890,180 905,185 915,200 938,195 935,185 938,200 890,205 880,185 862,160 852,185 840,165 828,140 810,160 798,150|915,170 925,180 915,178"],
  ["Europe", "1125,45 1050,45 1035,100 1055,90 1050,130 1020,155 1010,180 990,175 992,205 1010,208 1025,180 1045,175 1060,195 1055,175 1075,190 1080,205 1125,200 1125,165 1098,160 1100,150 1125,148|982,70 992,65 995,80 984,85|1005,105 1015,120 1018,145 1000,145 1008,125|990,130 1000,128 996,145"],
  ["Oceania", "1163,130 1175,125 1188,110 1200,118 1210,112 1225,140 1222,165 1210,172 1195,155 1165,162|1208,95 1218,102 1208,104"],
  ["Middle East", "1348,82 1370,80 1390,78 1410,85 1425,76 1440,65 1455,75 1475,76 1495,72 1475,90 1478,120 1455,140 1438,140 1420,138 1408,122 1398,125 1400,138 1422,155 1405,172 1378,188 1370,176 1368,165 1362,142 1362,120 1368,95"],
];

const SPECKS = "1190,60 1200,62 1212,62 1222,60 1258,50 1262,60 1260,75 1280,75 1300,65 1303,78 1222,92 1232,100 1270,98 1275,105 1245,128 1252,132 1272,120 1285,128 1252,170 1245,182 1240,200 1210,90 1205,100";

const GLOBE_WATER = [
  "66,128 64,106 80,80 95,68 92,80 104,95 90,108 76,115",
  "78,150 95,147 120,163 110,183 95,188 90,168",
  "108,74 118,65 130,70 133,88 126,94 112,85",
  "136,76 152,86 160,100 150,108 140,96",
  "138,118 148,112 161,125 160,148 150,157 137,140",
];

function RegionIcon({ index, outlineText }) {
  const left = 35 + 187 * index;
  if (!outlineText)
    return (
      <svg width="60" height="60" viewBox={`${left} 36 152 180`} preserveAspectRatio="none">
        <ellipse cx="111" cy="126" rx="66" ry="78" fill="#dbe6eb" />
        <ellipse cx="111" cy="126" rx="61" ry="73" fill="#1d1d1d" />
        {GLOBE_WATER.map((part) => (
          <path key={part} d={outline(part)} fill="#fff" />
        ))}
      </svg>
    );
  return (
    <svg width="60" height="60" viewBox={`${left} 36 152 180`} preserveAspectRatio="none">
      {index === 6 &&
        parse(SPECKS).map(([x, y], i) => <circle key={i} cx={x} cy={y} r="6" fill="#d0dce2" />)}
      {[["#d8e4ea", 16], ["#000", 2]].map(([color, width]) =>
        outlineText.split("|").map((part, i) => (
          <path key={color + i} d={outline(part)} fill={color} stroke={color} strokeWidth={width} strokeLinejoin="round" />
        ))
      )}
    </svg>
  );
}

/* ---------- toolbar icons ---------- */

const ArrowIcon = ({ flip }) => (
  <svg width="48" height="48" viewBox="0 0 48 48">
    <defs>
      <linearGradient id={flip ? "ar" : "al"} x1="0" y1="0" x2="0" y2="1">
        <stop offset="0" stopColor="#5c5c5e" />
        <stop offset="1" stopColor="#3b3b3e" />
      </linearGradient>
    </defs>
    <path
      d="M1 21L24 4V15H46V28H24V39Z"
      fill={`url(#${flip ? "ar" : "al"})`}
      transform={flip ? "translate(47 0) scale(-1 1)" : undefined}
    />
  </svg>
);

const PdfIcon = () => (
  <svg width="48" height="48" viewBox="0 0 48 48">
    <ellipse cx="22" cy="43" rx="21" ry="2" fill="#ccc" />
    <path d="M7 8q0-5 5-5h14l10 10v25q0 4-4 4H11q-4 0-4-4z" fill="#ececec" />
    <path d="M27 3l10 11q-9-1-10-3z" fill="#8b8b8b" />
    <rect x="2" y="19" width="40" height="15" rx="2" fill="#c0241e" />
    <rect x="2" y="27" width="40" height="7" rx="2" fill="#98120f" />
    <text x="22" y="31" fill="#fff" fontFamily="DejaVu Sans" fontWeight="700" fontSize="11" textAnchor="middle">PDF</text>
  </svg>
);

const ExcelIcon = () => (
  <svg width="48" height="48" viewBox="0 0 48 48">
    <defs>
      <linearGradient id="xl" x1="0" y1="0" x2="1" y2="1">
        <stop offset="0" stopColor="#a3c78e" />
        <stop offset="0.5" stopColor="#549a3e" />
        <stop offset="1" stopColor="#2f6b1c" />
      </linearGradient>
    </defs>
    <rect width="48" height="48" fill="url(#xl)" />
    <rect x="5" y="5" width="39" height="39" fill="#f3f6f1" stroke="#86b071" strokeWidth="2" />
    <path d="M29 10h12L20 36H7z" fill="#3f9443" />
    <path d="M8 10h12l21 26H29z" fill="#4fa852" />
    <path d="M12 12h6l18 22h-5z" fill="#7cc67a" />
    <path d="M36 36h6v-4z" fill="#23405c" />
  </svg>
);

/* ---------- data ---------- */

const TABS = [
  ["Select Wave", 240],
  ["Select Countries", 240],
  ["Survey questions", 240],
  ["Responses", 180],
  ["Time Series", 198],
  ["Maps", 190],
];

const ROWS = [
  ["Algeria", "6.3"], ["Azerbaijan", "6.7"], ["Argentina", "7.5"], ["Australia", "7.2"],
  ["Bahrain", "6.8"], ["Armenia", "5.2"], ["Brazil", "7.8"], ["Belarus", "5.8"],
  ["Chile", "7.3"], ["China", "6.9"], ["Taiwan", "6.9"], ["Colombia", "8.4"],
  ["Cyprus", "7.2"], ["Ecuador", "7.9"], ["Estonia", "6.3"], ["Georgia", "5.5"],
  ["Germany", "7.4"], ["Ghana", "6.1"], ["Hong Kong", "6.9"], ["India", "6.5"],
  ["Iraq", "5.9"], ["Japan", "6.9"], ["Kazakhstan", "7.2"], ["Jordan", "6.6"],
];

const MIN = 4;
const MAX = 9.5;
const place = (v) => ({ left: `${((v - MIN) / (MAX - MIN)) * 100}%` });

const HandleDrawing = ({ value }) => (
  <Handle width="26" height="57" viewBox="0 0 26 57" style={place(value)}>
    <path d="M1 1H25V25H17L14 56H12L9 25H1Z" fill="#ababab" stroke="#787878" strokeWidth="2" />
    <path d="M2 3H24" stroke="#ddd" strokeWidth="2" />
    <path d="M5 7V19M11 7V19M17 7V19" stroke="#ddd" strokeWidth="2" />
    <path d="M7 7V19M13 7V19M19 7V19" stroke="#777" strokeWidth="2" />
  </Handle>
);

function MeanLegend() {
  const [low, setLow] = useState(MIN);
  const [high, setHigh] = useState(MAX);
  return (
    <Legend>
      <LegendEnd>Lowest Mean</LegendEnd>
      <Scale>
        <Bar>
          <Mark style={place(5)}>Low</Mark>
          <Mark style={place(7)}>Medium</Mark>
          <Mark style={place(8)}>High</Mark>
        </Bar>
        <HandleDrawing value={low} />
        <HandleDrawing value={high} />
        <Range type="range" aria-label="Lowest mean" min={4} max={6.5} step={0.1} value={low} onChange={(e) => setLow(+e.target.value)} />
        <Range $upper type="range" aria-label="Highest mean" min={7} max={9.5} step={0.1} value={high} onChange={(e) => setHigh(+e.target.value)} />
        <Axis>
          {[4, 5, 7, 8, 9.5].map((v) => (
            <Tick key={v} style={place(v)}>{v}</Tick>
          ))}
        </Axis>
      </Scale>
      <LegendEnd $right>Highest Mean</LegendEnd>
    </Legend>
  );
}

export default function App() {
  return (
    <Page>
      <GlobalStyle />
      <Title>World Values Survey Wave 6: 2010-2014</Title>
      <Tabs>
        {TABS.map(([name, width]) => (
          <Tab key={name} href="#" $width={width} $active={name === "Maps"}>{name}</Tab>
        ))}
      </Tabs>
      <QuestionRow>
        <Question>V23.- Satisfaction with your life</Question>
        <Tools>
          <ToolButton aria-label="Previous question"><ArrowIcon /></ToolButton>
          <ToolButton aria-label="Save as document"><PdfIcon /></ToolButton>
          <ToolButton aria-label="Save as spreadsheet"><ExcelIcon /></ToolButton>
          <ToolButton aria-label="Next question"><ArrowIcon flip /></ToolButton>
        </Tools>
      </QuestionRow>
      <ControlRow>
        <Label htmlFor="indicator">Type of indicator to display:</Label>
        <SelectBox>
          <Select id="indicator" defaultValue="avg">
            <option value="avg">Average value</option>
          </Select>
          <svg width="29" height="34" viewBox="0 0 29 34">
            <defs>
              <linearGradient id="sel" x1="0" y1="0" x2="0" y2="1">
                <stop offset="0" stopColor="#6cb3fa" />
                <stop offset="1" stopColor="#0a6bfe" />
              </linearGradient>
            </defs>
            <path d="M0 0H23Q29 0 29 6V28Q29 34 23 34H0Z" fill="url(#sel)" />
            <path d="M9 14l5-6 6 6M9 20l5 6 6-6" fill="none" stroke="#fff" strokeWidth="2.4" strokeLinecap="round" strokeLinejoin="round" />
          </svg>
        </SelectBox>
        <Actions>
          <ActionButton type="button">Refresh map</ActionButton>
          <ActionButton type="button">Restore defaults</ActionButton>
        </Actions>
      </ControlRow>
      <Content>
        <MapColumn>
          <RegionBar>
            {REGIONS.map(([name, text], i) => (
              <RegionButton key={name} aria-label={name}>
                <RegionIcon index={i} outlineText={text} />
              </RegionButton>
            ))}
          </RegionBar>
          <MapFrame>
            <MapHeading>
              <MapTitle>Satisfaction with your life</MapTitle>
              <MapSubtitle>Mean</MapSubtitle>
            </MapHeading>
            <WorldMap />
            <MeanLegend />
          </MapFrame>
          <Footnote>WVS, Total N=87769</Footnote>
        </MapColumn>
        <Side>
          <SideTitle>MAP PARAMETERS:</SideTitle>
          <SideText>
            The map shows the distribution of the average value for this question, excluding missing values.
          </SideText>
          <SideTitle>MAP VALUES:</SideTitle>
          <Values>
            <thead>
              <tr>
                <HeadCell>Country</HeadCell>
                <HeadCell $width="120px">Value</HeadCell>
              </tr>
            </thead>
            <tbody>
              {ROWS.map(([name, value]) => (
                <tr key={name}>
                  <NameCell>{name}</NameCell>
                  <ValueCell>{value}</ValueCell>
                </tr>
              ))}
            </tbody>
          </Values>
        </Side>
      </Content>
      <Markup viewBox="0 0 1438 1510" fill="none" stroke={red} strokeWidth="5">
        <ellipse cx="309" cy="200" rx="265" ry="78" />
        <ellipse cx="1332" cy="821" rx="106" ry="159" />
        <path d="M1330 980L1290 1018" />
        <path d="M1274 1032L1284 1006L1301 1025Z" fill={red} stroke="none" />
      </Markup>
      <Note>gives a mean value for satisfaction of life, contextualized in geographical view but unable to view the reason for satisfaction</Note>
    </Page>
  );
}
